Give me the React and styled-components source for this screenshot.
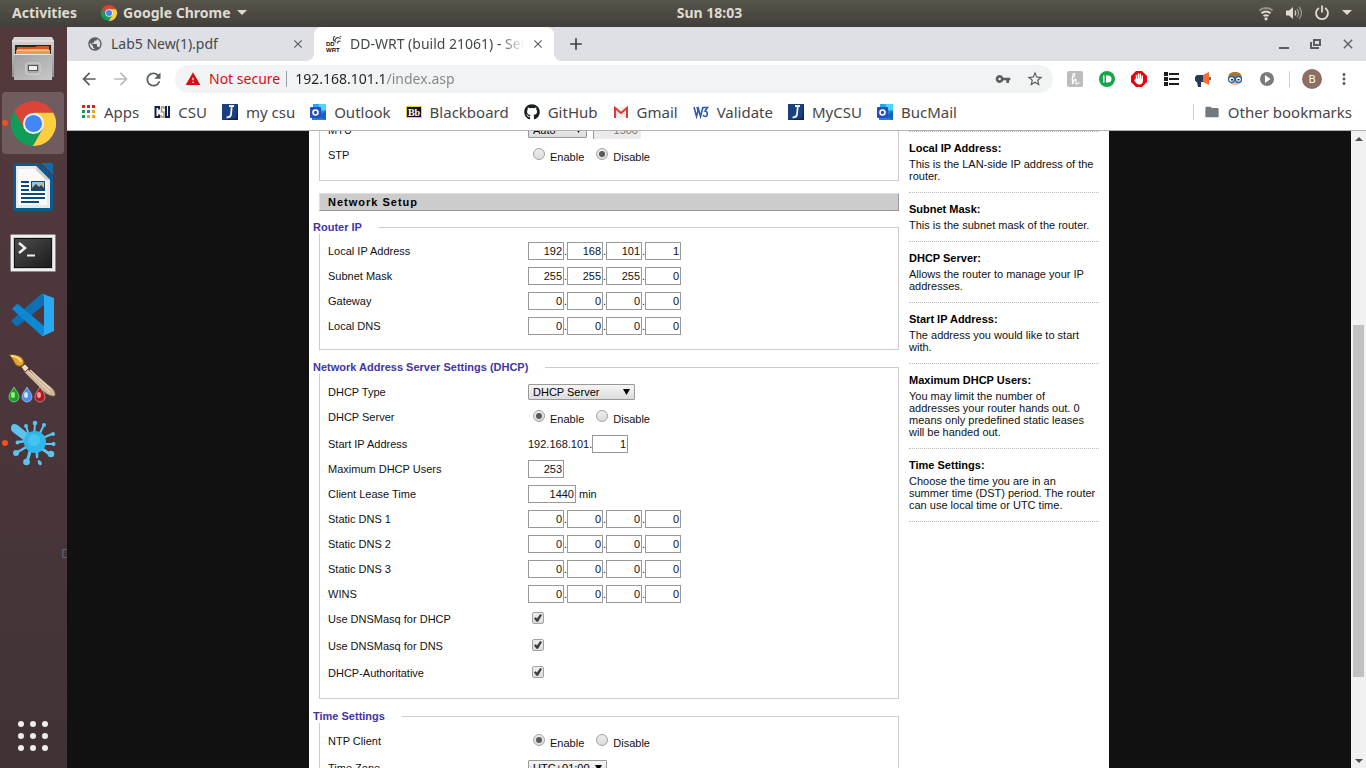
import React from "react";
import styled, { createGlobalStyle, css } from "styled-components";
import {
  MdArrowBack,
  MdArrowForward,
  MdRefresh,
  MdWarning,
  MdVpnKey,
  MdStarBorder,
  MdMoreVert,
  MdFolder,
  MdPublic,
  MdClose,
  MdAdd,
} from "react-icons/md";
import { FaGithub } from "react-icons/fa";

const GlobalStyle = createGlobalStyle`
  * { box-sizing: border-box; }
  body { margin: 0; background: #111; }
  button, input, select { font: inherit; color: inherit; margin: 0; }
  button { border: 0; padding: 0; background: none; }
  a { color: inherit; text-decoration: none; }
  svg { display: block; flex: none; }
`;

const uiFont = `"Noto Sans", "Open Sans", sans-serif`;
const pageFont = `"Liberation Sans", Arial, sans-serif`;

/* ---------- Desktop shell ---------- */

const Desktop = styled.div`
  display: flex;
  flex-direction: column;
  height: 100vh;
  overflow: hidden;
  font-family: ${uiFont};
`;

const TopBar = styled.header`
  display: flex;
  align-items: center;
  flex: none;
  height: 27px;
  padding-bottom: 1px;
  background: linear-gradient(#57544b, #403f3a);
  color: #dfdbd2;
  font-size: 14px;
  font-weight: 700;
  line-height: 18px;
`;

const TopLeft = styled.div`
  display: flex;
  align-items: center;
  flex: 1 1 67px;
  gap: 24px;
  padding-left: 12px;
`;

const AppMenu = styled.button`
  display: flex;
  align-items: center;
  gap: 6px;
`;

const TopRight = styled.div`
  display: flex;
  align-items: center;
  justify-content: flex-end;
  flex: 1 1 0;
  gap: 12px;
  padding-right: 14px;
`;

const Workspace = styled.div`
  display: flex;
  flex: 1;
  min-height: 0;
`;

const Dock = styled.nav`
  position: relative;
  display: flex;
  flex-direction: column;
  flex: none;
  gap: 2px;
  width: 67px;
  padding: 1px 3px 1px 2px;
  overflow: hidden;
  background: linear-gradient(#54393c, #4b363b 50%, #403335);
`;

const DockItem = styled.button`
  position: relative;
  display: flex;
  align-items: center;
  justify-content: center;
  flex: none;
  height: 62px;
  border-radius: 4px;
  background: ${(p) => (p.$active ? "#705b5e" : "transparent")};
  margin-top: ${(p) => (p.$last ? "auto" : 0)};

  ${(p) =>
    p.$running &&
    css`
      &::before {
        content: "";
        position: absolute;
        left: 0;
        top: 28px;
        width: 6px;
        height: 6px;
        border-radius: 50%;
        background: #e95420;
      }
    `}
`;

const DesktopLabel = styled.span`
  position: absolute;
  left: 61px;
  top: 517px;
  color: #58656f;
  font-size: 13px;
  line-height: 18px;
`;

/* ---------- Browser ---------- */

const Browser = styled.section`
  display: flex;
  flex-direction: column;
  flex: 1;
  min-width: 0;
  background: #fff;
`;

const TabStrip = styled.div`
  display: flex;
  align-items: center;
  flex: none;
  height: 34px;
  background: #dee0e5;
  color: #45494d;
`;

const Tab = styled.div`
  position: relative;
  display: flex;
  align-items: center;
  gap: 8px;
  flex: 0 1 ${(p) => (p.$active ? 240 : 247)}px;
  min-width: 0;
  height: 34px;
  padding: 0 10px 0 ${(p) => (p.$active ? 12 : 20)}px;
  border-radius: 8px 8px 0 0;
  font-size: 14px;
  line-height: 20px;

  ${(p) =>
    p.$active &&
    css`
      background: #fff;
      &::before,
      &::after {
        content: "";
        position: absolute;
        bottom: 0;
        width: 8px;
        height: 8px;
      }
      &::before {
        left: -8px;
        background: radial-gradient(circle at 0 0, #dee0e5 8px, #fff 8px);
      }
      &::after {
        right: -8px;
        background: radial-gradient(circle at 100% 0, #dee0e5 8px, #fff 8px);
      }
    `}
`;

const TabTitle = styled.button`
  flex: 1;
  min-width: 0;
  overflow: hidden;
  white-space: nowrap;
  text-align: left;
  mask-image: ${(p) =>
    p.$fade ? "linear-gradient(to left, transparent, #000 24px)" : "none"};
`;

const IconButton = styled.button`
  display: flex;
  align-items: center;
  justify-content: center;
  width: ${(p) => p.$size || 20}px;
  height: 20px;
  flex: none;
  color: ${(p) => p.$color || "#5a5e63"};
`;

const NewTab = styled(IconButton)`
  margin-left: 12px;
  color: #3c4043;
`;

const WindowControls = styled.div`
  display: flex;
  gap: 12px;
  margin-left: auto;
  padding-right: 8px;
`;

const Toolbar = styled.div`
  display: flex;
  align-items: center;
  flex: none;
  height: 36px;
  padding: 0 12px;
  gap: 12px;
`;

const Omnibox = styled.div`
  display: flex;
  align-items: center;
  flex: 1;
  min-width: 0;
  height: 28px;
  padding: 0 8px 0 10px;
  border-radius: 14px;
  background: #f1f3f4;
  font-size: 14px;
  line-height: 20px;
`;

const NotSecure = styled.button`
  display: flex;
  align-items: center;
  gap: 8px;
  margin-right: 8px;
  padding-right: 6px;
  border-right: 1px solid #9aa0a6;
  color: #dc0a14;
  line-height: 16px;
`;

const AddressInput = styled.input`
  flex: 1;
  min-width: 0;
  height: 20px;
  padding: 0;
  border: 0;
  outline: 0;
  background: linear-gradient(to right, #202124 91px, #80868b 91px);
  background-clip: text;
  color: transparent;
`;

const OmniActions = styled.div`
  display: flex;
  gap: 12px;
`;

const Extensions = styled.div`
  display: flex;
  align-items: center;
  gap: 12px;
`;

const ToolbarDivider = styled.span`
  width: 1px;
  height: 16px;
  background: #cfd1d4;
`;

const Avatar = styled.button`
  width: 20px;
  height: 20px;
  border-radius: 50%;
  background: #8d6e63;
  color: #fff;
  font-size: 11px;
  line-height: 20px;
`;

const BookmarksBar = styled.nav`
  display: flex;
  align-items: center;
  flex: none;
  height: 34px;
  padding: 0 14px 3px 13px;
  gap: 15px;
  border-bottom: 1px solid #b3b3b5;
  color: #46464a;
  font-size: 15px;
  line-height: 20px;
  white-space: nowrap;
`;

const Bookmark = styled.a`
  display: flex;
  align-items: center;
  gap: 8px;
`;

const OtherBookmarks = styled.button`
  display: flex;
  align-items: center;
  gap: 8px;
  height: 16px;
  margin-left: auto;
  padding-left: 10px;
  border-left: 1px solid #cfd1d4;
  line-height: 16px;
`;

/* ---------- Web page ---------- */

const Viewport = styled.div`
  display: flex;
  flex: 1;
  min-height: 0;
  background: #111;
`;

const PageArea = styled.div`
  flex: 1;
  min-width: 0;
  overflow: hidden;
`;

const Page = styled.main`
  display: grid;
  grid-template-columns: minmax(0, 1fr) 190px;
  gap: 10px;
  max-width: 800px;
  margin: -13px auto 0;
  padding: 0 10px;
  background: #fff;
  color: #111;
  font-family: ${pageFont};
  font-size: 11px;
  line-height: 12px;
`;

const Settings = styled.form`
  min-width: 0;
`;

const Group = styled.fieldset`
  min-width: 0;
  margin: 0 0 11px;
  padding: ${(p) => p.$top ?? 6}px 8px 10px;
  border: 1px solid #ccc;
  ${(p) => p.$continued && "border-top: 0;"}
`;

const Legend = styled.legend`
  margin-left: -15px;
  padding: 0 17px 0 0;
  background: #fff;
  color: #4335a2;
  font-weight: 700;
  line-height: 13px;
`;

const SectionTitle = styled.h2`
  height: 18px;
  margin: 12px 0 10px;
  padding-left: 8px;
  border: 1px solid #999;
  border-top-color: #e0e0e0;
  border-left-color: #e0e0e0;
  background: #ccc;
  color: #000;
  font-size: 11px;
  line-height: 16px;
  letter-spacing: 1px;
`;

const Row = styled.div`
  display: flex;
  align-items: flex-start;
  min-height: ${(p) => (p.$tall ? 27 : 25)}px;
  padding-top: 3px;
  line-height: 18px;
`;

const RowLabel = styled.label`
  flex: 0 0 200px;
`;

const NumberBox = styled.input`
  width: ${(p) => (p.$wide ? 48 : 36)}px;
  height: 18px;
  padding: 0 1px;
  border: 1px solid #999;
  background: #fff;
  text-align: right;

  &:disabled {
    border: 0;
    border-left: 1px solid #999;
    height: 18px;
    padding-right: 3px;
    background: #ebebeb;
    color: #777;
  }
`;

const Octets = styled.span`
  display: flex;
`;

const Dot = styled.span`
  width: 3px;
`;

const SelectBox = styled.span`
  display: grid;
  align-items: center;
  width: ${(p) => p.$width}px;
  height: 16px;
  margin: 1px 6px 0 0;
  color: #000;

  select,
  svg {
    grid-area: 1 / 1;
  }
  select {
    appearance: none;
    width: 100%;
    height: 16px;
    padding: 0 4px;
    border: 1px solid #999;
    border-radius: 1px;
    background: linear-gradient(#f6f6f6, #dcdcdc);
    line-height: 14px;
  }
  svg {
    justify-self: end;
    margin-right: 5px;
    pointer-events: none;
  }
`;

const Unit = styled.label`
  padding-left: 3px;
`;

const Radios = styled.span`
  display: flex;
  gap: 12px;
  padding-left: 5px;
`;

const RadioLabel = styled.label`
  display: flex;
  align-items: flex-start;
  gap: 5px;

  span {
    padding-top: 2px;
  }
`;

const Radio = styled.input`
  appearance: none;
  display: grid;
  place-items: center;
  width: 12px;
  height: 12px;
  margin-top: 2px;
  border: 1px solid #a3a3a3;
  border-radius: 50%;
  background: linear-gradient(#ededed, #dcdcdc);

  &:checked::before {
    content: "";
    width: 6px;
    height: 6px;
    border-radius: 50%;
    background: #5a5a5a;
  }
`;

const Checkbox = styled.input`
  appearance: none;
  display: grid;
  place-items: center;
  width: 12px;
  height: 12px;
  margin: 2px 0 0 4px;
  border: 1px solid #a3a3a3;
  border-radius: 2px;
  background: linear-gradient(#ededed, #dcdcdc);

  &:checked::before {
    content: "";
    width: 8px;
    height: 8px;
    background: #3c3c3c;
    clip-path: polygon(0 56%, 18% 40%, 38% 56%, 78% 0, 100% 12%, 50% 96%, 32% 96%);
  }
`;

const Help = styled.aside`
  margin-top: 13px;
  border-top: 1px dotted #bbb;

  dl {
    margin: 0;
  }
`;

const HelpItem = styled.div`
  padding: 10px 0;
  border-bottom: 1px dotted #bbb;

  dt {
    color: #000;
    font-weight: 700;
  }
  dd {
    margin: 4px 0 0;
    padding-right: 3px;
  }
`;

const Scrollbar = styled.div`
  display: flex;
  flex-direction: column;
  flex: none;
  width: 15px;
  background: #f1f1f1;
`;

const ScrollArrow = styled.button`
  display: grid;
  place-items: center;
  height: 15px;
`;

const ScrollSpace = styled.span`
  flex: ${(p) => p.$grow} 1 0;
`;

const ScrollThumb = styled(ScrollSpace)`
  margin: 0 2px;
  background: #c1c1c1;
`;

/* ---------- Drawings ---------- */

const ChromeLogo = ({ size }) => (
  <svg width={size} height={size} viewBox="2 2 44 44">
    <path fill="#db4437" d="M14.91 29.25L5.24 12.51A22 22 0 0 1 43.33 13.5H24Z" />
    <path fill="#0f9d58" d="M33.09 29.25L23.43 46A22 22 0 0 1 5.24 12.51L14.91 29.25Z" />
    <path fill="#ffcd40" d="M24 13.5H43.33A22 22 0 0 1 23.43 46L33.09 29.25Z" />
    <circle cx="24" cy="24" r="10.3" fill="#f1f1f1" />
    <circle cx="24" cy="24" r="8.4" fill="#4285f4" />
  </svg>
);

const FilesIcon = () => (
  <svg width="44" height="46" viewBox="0 0 44 46">
    <defs>
      <linearGradient id="fa" x2="0" y2="1">
        <stop stopColor="#d9d9d9" />
        <stop offset="1" stopColor="#8d8d8d" />
      </linearGradient>
      <linearGradient id="fb" x2="1" y2="1">
        <stop stopColor="#a0a0a0" />
        <stop offset="1" stopColor="#c8c8c8" />
      </linearGradient>
    </defs>
    <path d="M3 1h38l2 4v36H1V5z" fill="url(#fa)" />
    <path d="M1 5h42" stroke="#ececec" />
    <path d="M4 9h36v10H4z" fill="#2d2320" />
    <path d="M6 11h18l2-1h12v9H6z" fill="#d9551b" />
    <path d="M5 14h34v5H5z" fill="#f09a42" />
    <path d="M6 14h32" stroke="#fff2de" />
    <path d="M3 18h38v26H3z" fill="url(#fb)" />
    <path d="M3 18.500h38" stroke="#e8e8e8" />
    <rect x="15" y="27" width="14" height="11" rx="2" fill="#ababab" stroke="#d8d8d8" />
    <rect x="17.500" y="29.500" width="9" height="5" fill="#f0f0f0" stroke="#555" />
  </svg>
);

const WriterIcon = () => (
  <svg width="40" height="48" viewBox="0 0 40 48">
    <path d="M2 0h24l14 14v32a2 2 0 0 1-2 2H2a2 2 0 0 1-2-2V2a2 2 0 0 1 2-2z" fill="#0a5a94" />
    <path d="M28 0h10a2 2 0 0 1 2 2v10z" fill="#0f6cad" />
    <path d="M3 3h20l14 14v28H3z" fill="#e9e9e9" />
    <path d="M5 6h17l12 12v24H5z" fill="#fafafa" />
    <path d="M23 3l14 14h-4L23 7z" fill="#cdd0d2" />
    <path d="M8 19h8M8 23h8M8 27h8M8 31h24M8 35h24M8 39h18" stroke="#0a4a80" strokeWidth="2" />
    <path d="M18 18h14v10H18z" fill="#0a4a80" />
    <path d="M19 19h12v8H19z" fill="#8dc6ea" />
    <path d="M19 27v-2l4-4 3 3 2-2 3 3v2z" fill="#32414b" />
    <circle cx="29" cy="20.500" r="1.500" fill="#e9b53c" />
  </svg>
);

const TerminalIcon = () => (
  <svg width="46" height="42" viewBox="0 -4 46 42">
    <defs>
      <linearGradient id="tm" x2="1" y2="1">
        <stop stopColor="#4b4b4b" />
        <stop offset="1" stopColor="#1d1d1d" />
      </linearGradient>
    </defs>
    <rect width="46" height="38" rx="1.500" fill="#8a8a8a" />
    <rect x="1" y="1" width="44" height="36" fill="#efefef" />
    <rect x="3" y="3" width="40" height="32" fill="#cfcfcf" />
    <rect x="4" y="4" width="38" height="30" fill="#111" />
    <rect x="5" y="5" width="36" height="28" fill="url(#tm)" />
    <path d="M9 9l6 5-6 5" fill="none" stroke="#eee" strokeWidth="2.500" />
    <path d="M17 21.500h8" stroke="#eee" strokeWidth="2" />
  </svg>
);

const CodeIcon = () => (
  <svg width="42" height="42" viewBox="0 0 42 42">
    <path d="M0 28l4 4h2L32 11V0L29 0 0 26z" fill="#0f6fb5" />
    <path d="M0 15l1-1 4-4h1l26 22v10h-2L0 15z" fill="#0d88d4" />
    <path d="M31 0l11 4v33l-11 5-1-1c1 0 2 0 2-2V3c0-2-1-3-2-2z" fill="#2ba8f2" />
  </svg>
);

const BrushIcon = () => (
  <svg width="50" height="50" viewBox="0 0 50 50">
    <path d="M18 14l25 19c4 3 5 7 4 9-3 1-8-1-11-4L15 17z" fill="#cdb59c" stroke="#67462c" />
    <path d="M20 17l22 21M22 16l21 19" stroke="#e9d9c3" strokeWidth="1.500" />
    <path d="M21 17l21 20" stroke="#a58a70" strokeWidth=".7" strokeDasharray="2 1" />
    <path d="M13 13l4-3 4 4-4 4z" fill="#e9ddcb" stroke="#67462c" />
    <path d="M1 1c9-1 14 2 15 7 0 3-3 5-6 4-4-1-4-7-9-11z" fill="#eba42b" stroke="#7a5418" />
    <path d="M3 2c6 0 9 3 10 6" fill="none" stroke="#ffdf85" strokeWidth="2" />
    {[
      [6, "#13a51c", "#94ec89"],
      [19, "#4c8ef0", "#cfe1ff"],
      [32, "#b3151b", "#f19a98"],
    ].map(([x, dark, light]) => (
      <g key={x}>
        <path d={`M${x} 33c2 4 5 6 5 10a5 5 0 0 1-10 0c0-4 3-6 5-10z`} fill={dark} stroke="#e9e9e9" strokeWidth=".5" />
        <ellipse cx={x - 1} cy="41" rx="2" ry="3" fill={light} />
      </g>
    ))}
  </svg>
);

const SplatIcon = () => (
  <svg width="46" height="46" viewBox="0 0 46 46">
    <g stroke="#5bc3ec" strokeLinecap="round" fill="none">
      <path d="M16 6l4 12M25 3l-1 14M34 5l-6 12" strokeWidth="2" />
      <path d="M28 20l14-6M30 24h14" strokeWidth="2" />
      <path d="M28 26l13 9M21 28l-4 14" strokeWidth="3" />
      <path d="M18 26L6 33M18 21L8 22" strokeWidth="2.500" />
      <path d="M27 30v7" strokeWidth="2.500" />
    </g>
    <g fill="#5bc3ec">
      <path d="M1 8c0-5 5-5 9-1l11 9-5 6L4 13C2 12 1 10 1 8z" />
      <circle cx="16" cy="6" r="2" />
      <circle cx="25" cy="3" r="2.300" />
      <circle cx="34" cy="5" r="2" />
      <circle cx="43" cy="14" r="2" />
      <circle cx="43.500" cy="24" r="2" />
      <circle cx="41" cy="34" r="3.300" />
      <circle cx="16.500" cy="42" r="3.300" />
      <circle cx="6" cy="33" r="3" />
      <circle cx="7.500" cy="22.500" r="2" />
      <path d="M28 40c3 0 5 4 3 5s-4-2-3-5z" />
    </g>
    <circle cx="25" cy="22" r="11" fill="#2fb6ea" />
    <circle cx="24" cy="20" r="6" fill="#45c4f2" />
  </svg>
);

const AppsGridIcon = () => (
  <svg width="30" height="30" viewBox="0 0 30 30" fill="#eeeeec">
    {[3, 15, 27].map((y) => [3, 15, 27].map((x) => <circle key={`${x}-${y}`} cx={x} cy={y} r="3" />))}
  </svg>
);

const WifiIcon = () => (
  <svg width="16" height="16" viewBox="0 0 16 16" fill="none" stroke="#dfdbd2" strokeWidth="2">
    <path d="M1.500 5.500C5 2 11 2 14.500 5.500" opacity=".5" />
    <path d="M3.500 8.300c3-2.500 6-2.500 9 0M5.500 11c2-1.300 3-1.300 5 0" />
    <circle cx="8" cy="13.800" r="1.600" fill="#dfdbd2" stroke="none" />
  </svg>
);

const VolumeIcon = () => (
  <svg width="16" height="16" viewBox="0 0 16 16" fill="none" stroke="#dfdbd2" strokeWidth="1.300">
    <path d="M0 5.500h3l4-3.500v12l-4-3.500H0z" fill="#dfdbd2" stroke="none" />
    <path d="M9 5.500c1.300 2 1.300 3 0 5" />
    <path d="M11 4c2.300 3 2.300 5 0 8M13 2c3.300 4 3.300 8 0 12" opacity=".5" />
  </svg>
);

const PowerIcon = () => (
  <svg width="16" height="16" viewBox="0 0 16 16" fill="none" stroke="#dfdbd2" strokeWidth="1.800">
    <path d="M5 3a6 6 0 1 0 6 0M8 .5v7" />
  </svg>
);

const MenuArrow = () => (
  <svg width="10" height="6" viewBox="0 0 10 6">
    <path d="M0 0h10L5 5z" fill="#dfdbd2" />
  </svg>
);

const DdWrtIcon = () => (
  <svg width="16" height="16" viewBox="0 0 16 16">
    <g fill="none" stroke="#444" strokeWidth="1.200">
      <path d="M8 5a4 4 0 0 1 7-4M9.500 6.500A3 3 0 0 1 14.500 3M11.500 7.500a2 2 0 0 1 3-2" />
    </g>
    <g fill="#111" fontFamily="Liberation Sans" fontWeight="700" fontSize="6">
      <text x="0" y="10">DD</text>
      <text x="0" y="16">WRT</text>
    </g>
  </svg>
);

const AppsIcon = () => (
  <svg width="16" height="16" viewBox="0 0 16 16">
    {["#e8192c", "#e8192c", "#e8192c", "#1a9c4b", "#4169e8", "#f2a400", "#1a9c4b", "#f2a400", "#f2a400"].map(
      (fill, i) => (
        <rect key={i} x={2 + (i % 3) * 5} y={1 + Math.floor(i / 3) * 5} width="3" height="3" fill={fill} />
      )
    )}
  </svg>
);

const CsuIcon = () => (
  <svg width="16" height="16" viewBox="0 0 16 16" fill="none" strokeWidth="2">
    <path d="M5 5.500V3H1.500v10H5v-2.500" stroke="#14224f" />
    <path d="M10 5V3H7.500v5H10v5H7v-2" stroke="#a89a68" strokeWidth="1.500" />
    <path d="M12 2v11h3V2" stroke="#14224f" />
  </svg>
);

const JIcon = () => (
  <svg width="16" height="16" viewBox="0 0 16 16">
    <rect width="16" height="16" fill="#1c3f80" />
    <path d="M0 16h16V0l-2 14z" fill="#0d2555" />
    <path d="M7 2h5M9.800 2L9 10.500c-.3 2-1.500 3-4.500 2.800" fill="none" stroke="#e6f5f5" strokeWidth="1.800" />
  </svg>
);

const OutlookIcon = () => (
  <svg width="16" height="16" viewBox="0 0 16 16">
    <path d="M3 0h13v9H3z" fill="#29a9ea" />
    <path d="M9 0h7v6H9z" fill="#4bd8ff" />
    <path d="M2 8l14-1v9H2z" fill="#2382d8" />
    <path d="M16 7L9 12l7 4z" fill="#1763c0" />
    <rect y="3" width="11" height="11" rx="1" fill="#244fc2" />
    <circle cx="5.500" cy="8.500" r="2.500" fill="none" stroke="#fff" strokeWidth="1.600" />
  </svg>
);

const BlackboardIcon = () => (
  <svg width="16" height="16" viewBox="0 0 16 16">
    <rect y="2" width="16" height="12" fill="#e8cf3f" />
    <rect x="1" y="3" width="14" height="10" fill="#111" />
    <text x="8" y="11.500" textAnchor="middle" fill="#fff" fontFamily="Liberation Serif" fontWeight="700" fontSize="10">Bb</text>
  </svg>
);

const GmailIcon = () => (
  <svg width="16" height="16" viewBox="0 0 16 16">
    <path d="M1 3h14v11H1z" fill="#eee" />
    <path d="M1 14l5-6M15 14l-5-6" stroke="#ccc" />
    <path d="M2 14V4l6 5 6-5v10" fill="none" stroke="#dd3a32" strokeWidth="2" />
  </svg>
);

const W3Icon = () => (
  <svg width="16" height="16" viewBox="0 0 16 16" fill="none" stroke="#2b5ba8" strokeWidth="1.600">
    <path d="M1 3l2.500 9.500L5.500 5l2 7.500L10 3M4 3l1.500 5" />
    <path d="M10 3.500h4.500L12 7c3 0 3 5.500.5 5.500-1.300 0-2-.5-2.500-1.500" />
  </svg>
);

const HoneyIcon = () => (
  <svg width="16" height="16" viewBox="0 0 16 16">
    <rect width="16" height="16" rx="2" fill="#bdbdbd" />
    <path d="M4.500 8C7 7 9 2.500 7 2.500S5.500 9 5.500 13C7 8 9 7.500 9 9s-.5 4 .5 4S12 12 12 11" fill="none" stroke="#fff" strokeWidth="1.200" />
  </svg>
);

const PushbulletIcon = () => (
  <svg width="16" height="16" viewBox="0 0 16 16">
    <circle cx="8" cy="8" r="8" fill="#15a64a" />
    <path d="M4 4.500h1.500v7H4zM7 4.500h2a3.500 3.500 0 0 1 0 7H7z" fill="#fff" />
  </svg>
);

const AdblockIcon = () => (
  <svg width="16" height="16" viewBox="0 0 16 16">
    <path d="M5 0h6l5 5v6l-5 5H5l-5-5V5z" fill="#f0000c" />
    <path d="M5.500 8V4.500M7.500 8V3M9.300 8V3.300M11.200 9V5" stroke="#fff" strokeWidth="1.400" strokeLinecap="round" />
    <path d="M4.800 7.500h7.100V10c0 2-1.300 3.500-3.400 3.500C6 13.500 5 12 3 9l1-.5z" fill="#fff" />
  </svg>
);

const ListIcon = () => (
  <svg width="16" height="16" viewBox="0 0 16 16" fill="#1c1c1c">
    <path d="M1 1h4v4H1zM1 6h4v4H1zM1 11h4v4H1zM6 2h10v2H6zM6 7h10v2H6zM6 12h10v2H6z" />
  </svg>
);

const MegaphoneIcon = () => (
  <svg width="16" height="16" viewBox="0 0 16 16">
    <path d="M0 6l2-2h7v7H6v5H3l-1-5H1L0 9z" fill="#253858" />
    <path d="M8 4l6-3v13l-6-3z" fill="#ff6b2b" />
    <path d="M15 6v3" stroke="#253858" strokeWidth="1.500" />
  </svg>
);

const FaceIcon = () => (
  <svg width="16" height="16" viewBox="0 0 16 16">
    <path d="M1 9c0-6 2-8 7-8s7 2 7 8z" fill="#a9772c" />
    <path d="M3 7h10v5c-2 3-8 3-10 0z" fill="#f5bd97" />
    <circle cx="4.500" cy="8.500" r="3" fill="#fff" stroke="#2462b5" strokeWidth="1.300" />
    <circle cx="11.500" cy="8.500" r="3" fill="#fff" stroke="#2462b5" strokeWidth="1.300" />
    <path d="M4 8h2v1.500H4zM10.500 8h2v1.500h-2z" fill="#222" />
  </svg>
);

const PlayIcon = () => (
  <svg width="16" height="16" viewBox="0 0 16 16">
    <circle cx="8" cy="8" r="7" fill="#7b7b7b" />
    <path d="M6 4l5.500 4L6 12z" fill="#fff" />
  </svg>
);

const MinimizeIcon = () => (
  <svg width="12" height="12" viewBox="0 0 12 12">
    <path d="M1 10h10" stroke="#5a5e63" strokeWidth="2" />
  </svg>
);

const RestoreIcon = () => (
  <svg width="12" height="12" viewBox="0 0 12 12" fill="none" stroke="#5a5e63" strokeWidth="2">
    <path d="M4 2h6v5H4zM1 4v6h8" />
  </svg>
);

const Triangle = ({ up, width = 8, height = 4 }) => (
  <svg width={width} height={height} viewBox="0 0 8 4" preserveAspectRatio="none">
    <path d={up ? "M0 4h8L4 0z" : "M0 0h8L4 4z"} fill={up === undefined ? "#000" : "#505050"} />
  </svg>
);

/* ---------- Data ---------- */

const bookmarks = [
  ["Apps", AppsIcon],
  ["CSU", CsuIcon],
  ["my csu", JIcon],
  ["Outlook", OutlookIcon],
  ["Blackboard", BlackboardIcon],
  ["GitHub", () => <FaGithub size={16} color="#1b1f23" />],
  ["Gmail", GmailIcon],
  ["Validate", W3Icon],
  ["MyCSU", JIcon],
  ["BucMail", OutlookIcon],
];

const extensions = [
  ["Honey", HoneyIcon],
  ["Pushbullet", PushbulletIcon],
  ["AdBlock", AdblockIcon],
  ["Reading list", ListIcon],
  ["Announcements", MegaphoneIcon],
  ["Profile helper", FaceIcon],
  ["Media player", PlayIcon],
];

const helpItems = [
  ["Local IP Address:", "This is the LAN-side IP address of the router."],
  ["Subnet Mask:", "This is the subnet mask of the router."],
  ["DHCP Server:", "Allows the router to manage your IP addresses."],
  ["Start IP Address:", "The address you would like to start with."],
  [
    "Maximum DHCP Users:",
    "You may limit the number of addresses your router hands out. 0 means only predefined static leases will be handed out.",
  ],
  [
    "Time Settings:",
    "Choose the time you are in an summer time (DST) period. The router can use local time or UTC time.",
  ],
];

/* ---------- Form rows ---------- */

const IpRow = ({ id, label, value }) => (
  <Row>
    <RowLabel htmlFor={`${id}-0`}>{label}</RowLabel>
    <Octets>
      {value.map((octet, i) => (
        <React.Fragment key={i}>
          {i > 0 && <Dot>.</Dot>}
          <NumberBox id={`${id}-${i}`} aria-label={`${label} ${i + 1}`} defaultValue={octet} />
        </React.Fragment>
      ))}
    </Octets>
  </Row>
);

const ToggleRow = ({ id, label, enabled }) => (
  <Row $tall role="radiogroup" aria-labelledby={`${id}-label`}>
    <RowLabel as="span" id={`${id}-label`}>{label}</RowLabel>
    <Radios>
      <RadioLabel>
        <Radio type="radio" name={id} defaultChecked={enabled} />
        <span>Enable</span>
      </RadioLabel>
      <RadioLabel>
        <Radio type="radio" name={id} defaultChecked={!enabled} />
        <span>Disable</span>
      </RadioLabel>
    </Radios>
  </Row>
);

const CheckRow = ({ id, label }) => (
  <Row $tall>
    <RowLabel htmlFor={id}>{label}</RowLabel>
    <Checkbox type="checkbox" id={id} defaultChecked />
  </Row>
);

const SelectRow = ({ id, label, value, width, children }) => (
  <Row>
    <RowLabel htmlFor={id}>{label}</RowLabel>
    <SelectBox $width={width}>
      <select id={id} defaultValue={value}>
        <option>{value}</option>
      </select>
      <Triangle width={7} height={6} />
    </SelectBox>
    {children}
  </Row>
);

const zeros = [0, 0, 0, 0];

export default function App() {
  return (
    <Desktop>
      <GlobalStyle />
      <TopBar>
        <TopLeft>
          <button>Activities</button>
          <AppMenu>
            <ChromeLogo size={16} />
            Google Chrome
            <MenuArrow />
          </AppMenu>
        </TopLeft>
        <button>Sun 18:03</button>
        <TopRight>
          <WifiIcon />
          <VolumeIcon />
          <PowerIcon />
          <MenuArrow />
        </TopRight>
      </TopBar>

      <Workspace>
        <Dock aria-label="Dock">
          <DockItem aria-label="Files"><FilesIcon /></DockItem>
          <DockItem aria-label="Google Chrome" $active $running><ChromeLogo size={45} /></DockItem>
          <DockItem aria-label="LibreOffice Writer"><WriterIcon /></DockItem>
          <DockItem aria-label="Terminal"><TerminalIcon /></DockItem>
          <DockItem aria-label="Visual Studio Code"><CodeIcon /></DockItem>
          <DockItem aria-label="Paint"><BrushIcon /></DockItem>
          <DockItem aria-label="Splat" $running><SplatIcon /></DockItem>
          <DockItem aria-label="Show applications" $last><AppsGridIcon /></DockItem>
          <DesktopLabel>D</DesktopLabel>
        </Dock>

        <Browser>
          <TabStrip>
            <Tab>
              <MdPublic size={16} color="#5a5e63" />
              <TabTitle>Lab5 New(1).pdf</TabTitle>
              <IconButton $size={12} aria-label="Close tab"><MdClose size={14} /></IconButton>
            </Tab>
            <Tab $active>
              <DdWrtIcon />
              <TabTitle $fade>DD-WRT (build 21061) - Setup</TabTitle>
              <IconButton $size={12} aria-label="Close tab"><MdClose size={14} /></IconButton>
            </Tab>
            <NewTab aria-label="New tab"><MdAdd size={20} /></NewTab>
            <WindowControls>
              <IconButton aria-label="Minimize"><MinimizeIcon /></IconButton>
              <IconButton aria-label="Restore"><RestoreIcon /></IconButton>
              <IconButton aria-label="Close"><MdClose size={16} /></IconButton>
            </WindowControls>
          </TabStrip>

          <Toolbar>
            <IconButton aria-label="Back"><MdArrowBack size={20} /></IconButton>
            <IconButton aria-label="Forward" $color="#b9bbbe"><MdArrowForward size={20} /></IconButton>
            <IconButton aria-label="Reload"><MdRefresh size={21} /></IconButton>
            <Omnibox>
              <NotSecure>
                <MdWarning size={16} />
                Not secure
              </NotSecure>
              <AddressInput aria-label="Address" defaultValue="192.168.101.1/index.asp" />
              <OmniActions>
                <IconButton aria-label="Passwords"><MdVpnKey size={16} /></IconButton>
                <IconButton aria-label="Bookmark this page"><MdStarBorder size={18} /></IconButton>
              </OmniActions>
            </Omnibox>
            <Extensions>
              {extensions.map(([name, Icon]) => (
                <IconButton key={name} aria-label={name}><Icon /></IconButton>
              ))}
              <ToolbarDivider />
              <Avatar>B</Avatar>
              <IconButton aria-label="Menu"><MdMoreVert size={18} /></IconButton>
            </Extensions>
          </Toolbar>

          <BookmarksBar aria-label="Bookmarks">
            {bookmarks.map(([name, Icon]) => (
              <Bookmark key={name} href="#">
                <Icon />
                {name}
              </Bookmark>
            ))}
            <OtherBookmarks>
              <MdFolder size={16} color="#757a7e" />
              Other bookmarks
            </OtherBookmarks>
          </BookmarksBar>

          <Viewport>
            <PageArea>
              <Page>
                <Settings>
                  <Group $top={0} $continued>
                    <SelectRow id="mtu" label="MTU" value="Auto" width={59}>
                      <NumberBox $wide disabled aria-label="MTU size" defaultValue="1500" />
                    </SelectRow>
                    <ToggleRow id="stp" label="STP" enabled={false} />
                  </Group>

                  <SectionTitle>Network Setup</SectionTitle>

                  <Group $top={5}>
                    <Legend>Router IP</Legend>
                    <IpRow id="local-ip" label="Local IP Address" value={[192, 168, 101, 1]} />
                    <IpRow id="subnet" label="Subnet Mask" value={[255, 255, 255, 0]} />
                    <IpRow id="gateway" label="Gateway" value={zeros} />
                    <IpRow id="local-dns" label="Local DNS" value={zeros} />
                  </Group>

                  <Group>
                    <Legend>Network Address Server Settings (DHCP)</Legend>
                    <SelectRow id="dhcp-type" label="DHCP Type" value="DHCP Server" width={107} />
                    <ToggleRow id="dhcp-server" label="DHCP Server" enabled />
                    <Row>
                      <RowLabel htmlFor="start-ip">Start IP Address</RowLabel>
                      <span>192.168.101.</span>
                      <NumberBox id="start-ip" defaultValue="1" />
                    </Row>
                    <Row>
                      <RowLabel htmlFor="max-users">Maximum DHCP Users</RowLabel>
                      <NumberBox id="max-users" defaultValue="253" />
                    </Row>
                    <Row>
                      <RowLabel htmlFor="lease">Client Lease Time</RowLabel>
                      <NumberBox id="lease" $wide defaultValue="1440" />
                      <Unit htmlFor="lease">min</Unit>
                    </Row>
                    <IpRow id="dns1" label="Static DNS 1" value={zeros} />
                    <IpRow id="dns2" label="Static DNS 2" value={zeros} />
                    <IpRow id="dns3" label="Static DNS 3" value={zeros} />
                    <IpRow id="wins" label="WINS" value={zeros} />
                    <CheckRow id="masq-dhcp" label="Use DNSMasq for DHCP" />
                    <CheckRow id="masq-dns" label="Use DNSMasq for DNS" />
                    <CheckRow id="authoritative" label="DHCP-Authoritative" />
                  </Group>

                  <Group>
                    <Legend>Time Settings</Legend>
                    <ToggleRow id="ntp" label="NTP Client" enabled />
                    <SelectRow id="zone" label="Time Zone" value="UTC+01:00" width={79} />
                  </Group>
                </Settings>

                <Help>
                  <dl>
                    {helpItems.map(([term, text]) => (
                      <HelpItem key={term}>
                        <dt>{term}</dt>
                        <dd>{text}</dd>
                      </HelpItem>
                    ))}
                  </dl>
                </Help>
              </Page>
            </PageArea>
            <Scrollbar>
              <ScrollArrow aria-label="Scroll up"><Triangle up width={8} height={4} /></ScrollArrow>
              <ScrollSpace $grow={179} />
              <ScrollThumb $grow={352} />
              <ScrollSpace $grow={76} />
              <ScrollArrow aria-label="Scroll down"><Triangle up={false} width={8} height={4} /></ScrollArrow>
            </Scrollbar>
          </Viewport>
        </Browser>
      </Workspace>
    </Desktop>
  );
}
